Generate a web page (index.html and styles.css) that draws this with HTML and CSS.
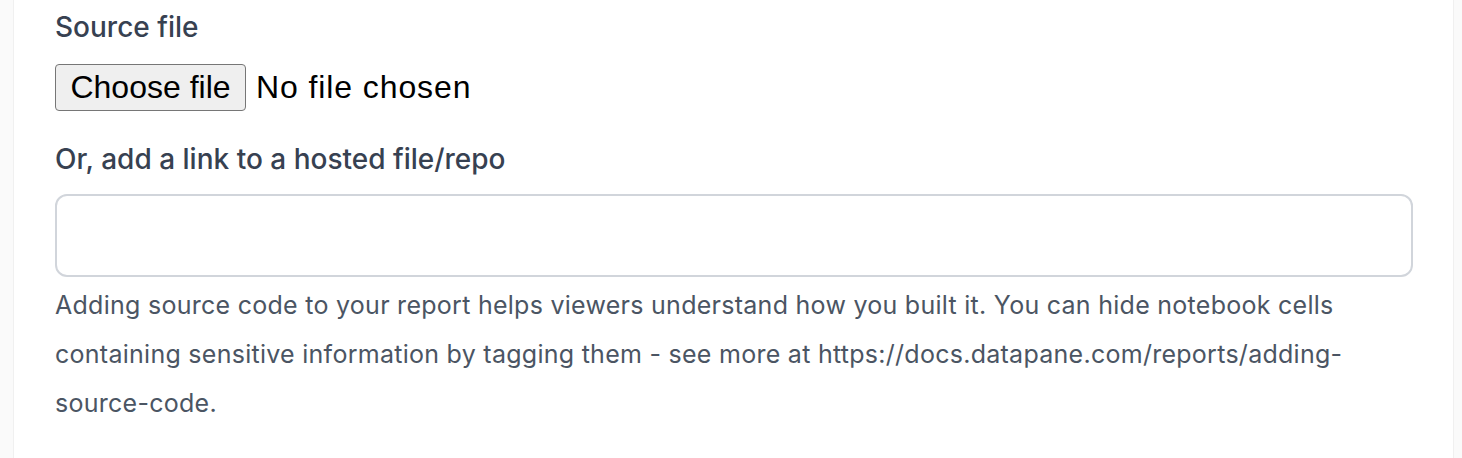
FILE: index.html
```html
<!DOCTYPE html>
<html lang="en">
<head>
<meta charset="utf-8">
<title>Source file</title>
<link rel="stylesheet" href="styles.css">
</head>
<body>
<div class="panel">
  <div class="field">
    <label class="label">Source file</label>
    <div class="file-row">
      <button type="button" class="file-btn">Choose file</button>
      <span class="file-status">No file chosen</span>
    </div>
  </div>
  <div class="field link-field">
    <label class="label" for="link">Or, add a link to a hosted file/repo</label>
    <input id="link" class="text-input" type="text">
    <p class="help">Adding source code to your report helps viewers understand how you built it. You can hide notebook cells containing sensitive information by tagging them - see more at https://docs.datapane.com/reports/adding-source-code.</p>
  </div>
</div>
</body>
</html>
```
FILE: styles.css
```css
html, body {
  margin: 0;
  padding: 0;
  background: #fafafa;
  height: 100%;
}
.panel {
  margin-left: 13px;
  width: 1441px;
  min-height: 100%;
  box-sizing: border-box;
  background: #ffffff;
  border-left: 1px solid #f0f0f0;
  border-right: 1px solid #f0f0f0;
  padding: 7px 40px 0 41px;
  font-family: Inter, "Noto Sans", sans-serif;
}
.label {
  display: block;
  font-size: 28px;
  font-weight: 500;
  line-height: 40px;
  color: #374151;
}
.file-row {
  display: flex;
  align-items: center;
  height: 47px;
  margin-top: 17px;
  font-family: "Liberation Sans", Arial, sans-serif;
}
.file-btn {
  width: 191px;
  height: 47px;
  box-sizing: border-box;
  background: #efefef;
  border: 1px solid #767676;
  border-radius: 4px;
  font-family: "Liberation Sans", Arial, sans-serif;
  font-size: 32px;
  color: #000;
  padding: 0;
  margin: 0;
}
.file-status {
  margin-left: 10px;
  font-size: 32px;
  letter-spacing: 0.9px;
  color: #000;
}
.link-field {
  margin-top: 28px;
}
.text-input {
  display: block;
  width: 100%;
  height: 83px;
  box-sizing: border-box;
  margin-top: 15px;
  border: 2px solid #d1d5db;
  border-radius: 12px;
  background: #fff;
  font-family: inherit;
  font-size: 25px;
  padding: 0 20px;
}
.help {
  margin: 4px 0 0;
  font-size: 25px;
  letter-spacing: 0.27px;
  line-height: 49px;
  color: #4b5563;
}
```
